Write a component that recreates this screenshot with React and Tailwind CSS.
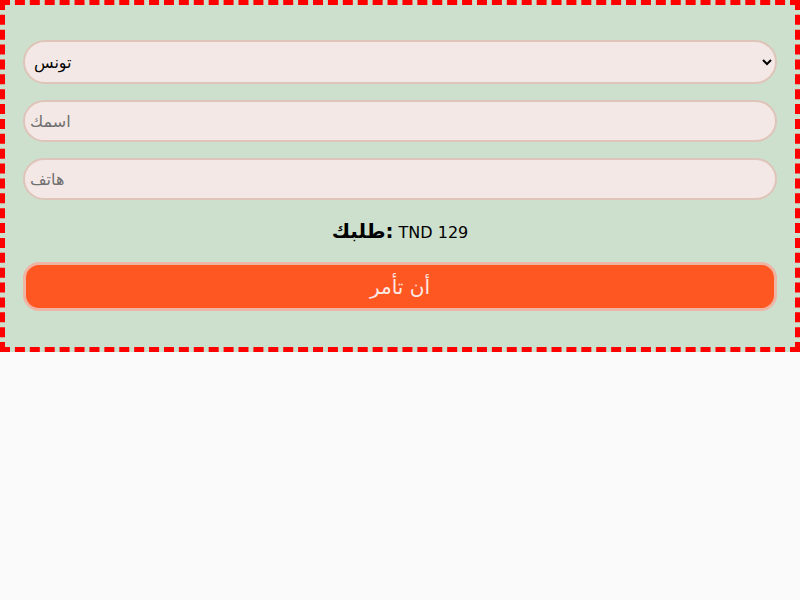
export default function App() {
  return (
    <div className="min-h-screen bg-[#fbfafb] font-['DejaVu_Sans',sans-serif]">
      <form className="border-[5px] border-dashed border-[#ff0000] bg-[#cddfcd] px-[18px] pt-[35px] pb-[36px] flex flex-col">
        <select className="h-[44px] w-full rounded-full border-2 border-[#dfc4b9] bg-[#f3e8e6] px-[5px] text-base text-black">
          <option>تونس</option>
        </select>
        <input
          className="mt-[16px] h-[42px] w-full rounded-full border-2 border-[#dfc4b9] bg-[#f3e8e6] px-[5px] text-base placeholder:text-[#707070]"
          type="text"
          placeholder="اسمك"
        />
        <input
          className="mt-[16px] h-[42px] w-full rounded-full border-2 border-[#dfc4b9] bg-[#f3e8e6] px-[5px] text-base placeholder:text-[#707070]"
          type="tel"
          placeholder="هاتف"
        />
        <p className="mt-[19px] text-center text-base text-black leading-[24px]">
          <strong className="text-[20px]">طلبك:</strong> TND 129
        </p>
        <button
          type="button"
          className="mt-[17px] h-[49px] w-full rounded-[16px] border-[3px] border-[#eeb4a4] bg-[#ff5722] text-[20px] text-[#fbe9e5]"
        >
          أن تأمر
        </button>
      </form>
    </div>
  );
}
